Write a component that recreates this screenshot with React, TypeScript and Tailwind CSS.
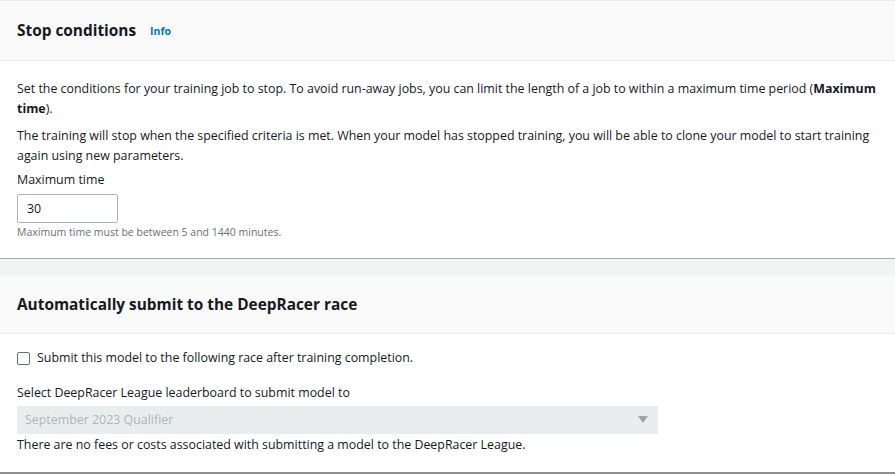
import React from "react";

export default function App() {
  return (
    <div
      className="w-[895px] h-[474px] overflow-hidden bg-[#f2f3f3] text-[#16191f]"
      style={{ fontFamily: '"Open Sans", "Noto Sans", sans-serif' }}
    >
      <section className="bg-white border-t border-[#eaeded] border-b border-b-[#a9a9a9]">
        <div className="h-[60px] bg-[#fafafa] border-b border-[#eaeded] flex items-center px-[17px] gap-[14px]">
          <h2 className="text-[15.4px] font-bold leading-[20px]">Stop conditions</h2>
          <span className="text-[10.5px] font-bold text-[#0073bb] leading-[14px] mt-[1px]">Info</span>
        </div>
        <div className="px-[17px] pt-[18px] pb-[18px] text-[12.4px] leading-[20px]">
          <p>
            Set the conditions for your training job to stop. To avoid run-away jobs, you can limit the length of a job to within a maximum time period (<b>Maximum</b> <b>time</b>).
          </p>
          <p className="mt-[7px]">
            The training will stop when the specified criteria is met. When your model has stopped training, you will be able to clone your model to start training again using new parameters.
          </p>
          <div className="mt-[4px]">Maximum time</div>
          <div className="mt-[4px] w-[101px] h-[29px] border border-[#aab7b8] rounded-[2px] flex items-center px-[9px]">
            30
          </div>
          <div className="mt-[1px] text-[10.5px] leading-[16px] text-[#687078]">
            Maximum time must be between 5 and 1440 minutes.
          </div>
        </div>
      </section>
      <div className="h-[17px]" />
      <section className="bg-white border-b-2 border-[#8f8f8f]">
        <div className="h-[58px] bg-[#fafafa] border-b border-[#eaeded] flex items-center px-[17px]">
          <h2 className="text-[15.4px] font-bold leading-[20px]">Automatically submit to the DeepRacer race</h2>
        </div>
        <div className="px-[17px] pt-[14px] pb-[17px] text-[12.4px] leading-[20px]">
          <label className="flex items-center gap-[7px]">
            <span className="w-[13px] h-[13px] border border-[#687078] rounded-[2px] bg-white inline-block" />
            <span>Submit this model to the following race after training completion.</span>
          </label>
          <div className="mt-[15px]">Select DeepRacer League leaderboard to submit model to</div>
          <div className="mt-[3px] w-[641px] h-[28px] bg-[#eaeded] rounded-[2px] flex items-center justify-between pl-[8px] pr-[10px] text-[#aab7b8]">
            <span>September 2023 Qualifier</span>
            <svg width="10" height="8" viewBox="0 0 10 8">
              <path d="M0 0 L10 0 L5 7 Z" fill="#9aa5a6" />
            </svg>
          </div>
          <div className="mt-[1px]">There are no fees or costs associated with submitting a model to the DeepRacer League.</div>
        </div>
      </section>
    </div>
  );
}
